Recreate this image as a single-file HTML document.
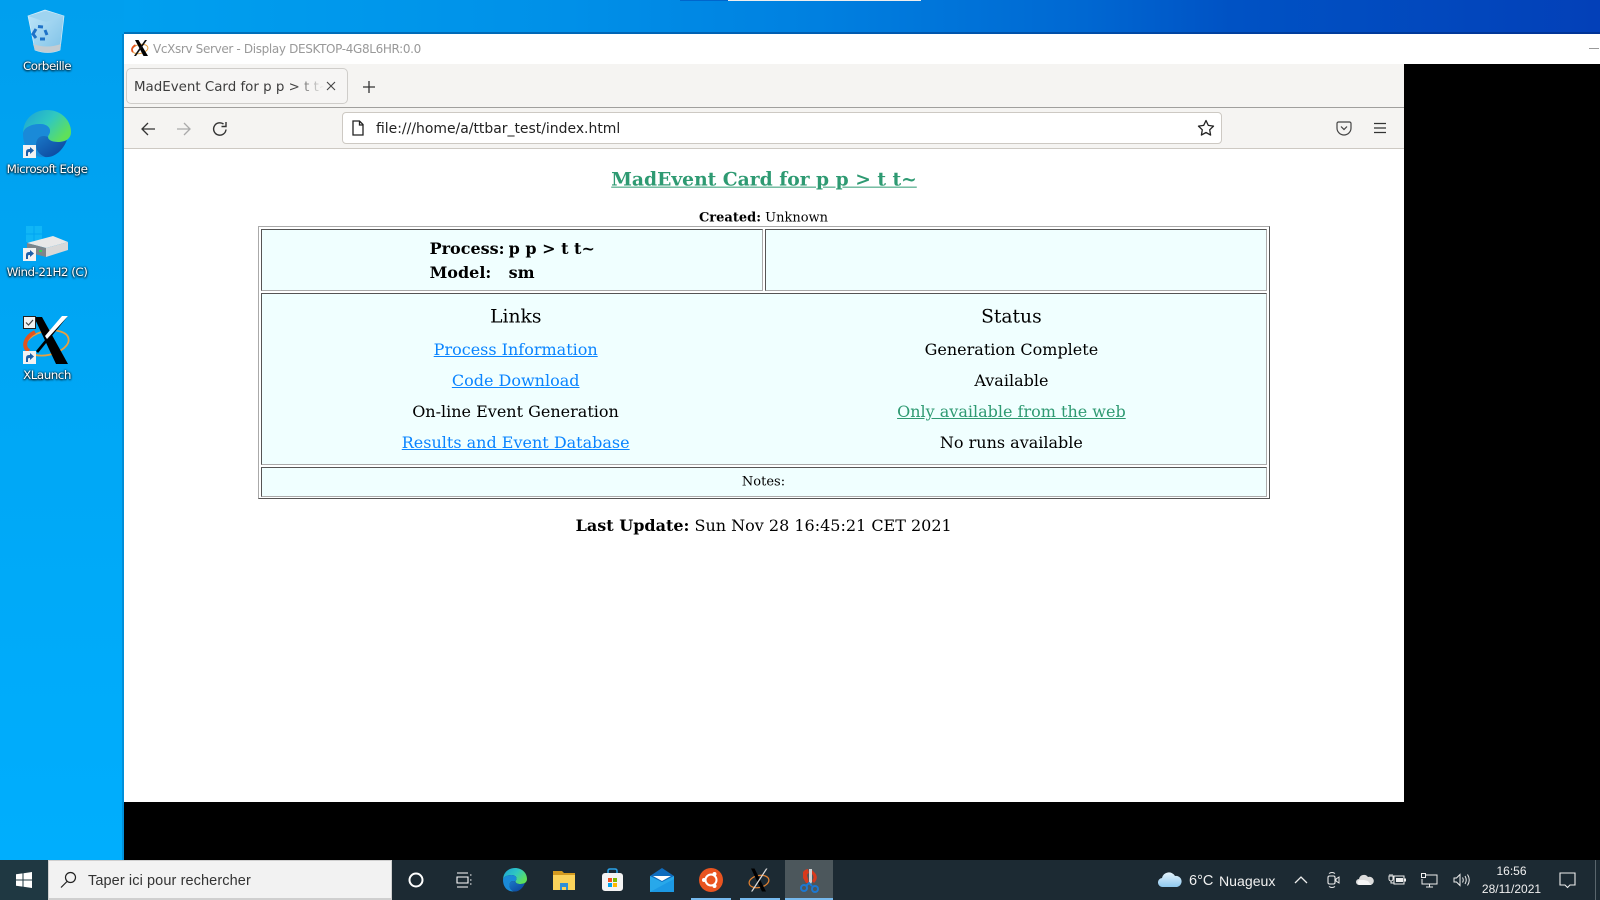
<!DOCTYPE html>
<html><head><meta charset="utf-8"><title>MadEvent Card</title>
<style>
html,body{margin:0;padding:0;width:1600px;height:900px;overflow:hidden;background:#00a8f6}
body{position:relative;font-family:"Liberation Sans",sans-serif}
.a{position:absolute}
.t{position:absolute;white-space:pre;line-height:1}
.c{position:absolute;white-space:pre;line-height:1;transform:translate(-50%,-50%)}
.s{font-family:"DejaVu Serif",serif;color:#000}
.d{font-family:"DejaVu Sans",sans-serif}
.lb{color:#fff;font-size:11.9px;font-family:"DejaVu Sans",sans-serif;letter-spacing:-.5px;text-shadow:0 1px 2px #000,0 0 2px #000}
.cell{position:absolute;box-sizing:border-box;background:#f0ffff;border:1px solid;border-color:#555 #aaa #aaa #555}
a{text-decoration:underline}
.bl{color:#0a84ff}.gr{color:#2e9a72}
.tb{color:#fff;font-family:"DejaVu Sans",sans-serif}
</style></head><body>
<div class="a" style="left:0;top:0;width:124px;height:860px;background:linear-gradient(180deg,#009fee 0%,#00a6f4 40%,#00aefd 100%)"></div>
<div class="a" style="left:124px;top:0;width:1476px;height:34px;background:linear-gradient(90deg,#00a0ef 0%,#0090e8 30%,#0080e0 47%,#0068d2 65%,#0052c4 75%,#0340b8 100%)"></div>
<div class="a" style="left:124px;top:32px;width:1476px;height:2px;background:rgba(0,30,90,.35)"></div>
<div class="a" style="left:680px;top:0;width:48px;height:1px;background:#0066cc"></div>
<div class="a" style="left:728px;top:0;width:193px;height:1px;background:#eee"></div>

<!-- window -->
<div class="a" style="left:122px;top:34px;width:2px;height:826px;background:rgba(0,60,120,.25)"></div>
<div class="a" style="left:124px;top:34px;width:1476px;height:826px;background:#000"></div>
<div class="a" style="left:124px;top:34px;width:1476px;height:30px;background:#fff"></div>
<svg class="a" style="left:131px;top:39px" width="18" height="18" viewBox="0 0 18 18"><ellipse cx="9" cy="10" rx="8" ry="4.500" transform="rotate(-12 9 10)" fill="none" stroke="#e8a040" stroke-width="1"/><path d="M4.500 6C1 8 0 11 2 13" fill="none" stroke="#e2531e" stroke-width="1.800"/><path d="M4 1h3.500L17 17h-4.500z" fill="#000"/><path d="M16 1h-2L3 17h2z" fill="#111"/></svg>
<div class="t" style="left:153px;top:43px;font-size:12px;color:#999;font-family:'DejaVu Sans',sans-serif;letter-spacing:-.35px">VcXsrv Server - Display DESKTOP-4G8L6HR:0.0</div>
<div class="a" style="left:1589px;top:48px;width:10px;height:1px;background:#999"></div>

<!-- browser chrome -->
<div class="a" style="left:124px;top:64px;width:1280px;height:43px;background:#f5f4f2"></div>
<div class="a" style="left:124px;top:107px;width:1280px;height:1px;background:#a09f9d"></div>
<div class="a" style="left:124px;top:108px;width:1280px;height:40px;background:#f5f4f2"></div>
<div class="a" style="left:124px;top:148px;width:1280px;height:1px;background:#cdc9c3"></div>
<div class="a" style="left:124px;top:149px;width:1280px;height:653px;background:#fff"></div>
<div class="a" style="left:126px;top:68px;width:222px;height:36px;box-sizing:border-box;background:#f6f5f4;border:1px solid #cfcdca;border-radius:5px"></div>
<div class="t d" style="left:134px;top:81px;font-size:13.4px;color:#3d3d3d;width:190px;overflow:hidden;-webkit-mask-image:linear-gradient(90deg,#000 84%,transparent 100%)">MadEvent Card for p p &gt; t t~</div>
<svg class="a" style="left:326px;top:81px" width="10" height="10" viewBox="0 0 10 10"><path d="M1 1l8 8M9 1l-8 8" stroke="#444" stroke-width="1.1"/></svg>
<svg class="a" style="left:362px;top:80px" width="14" height="14" viewBox="0 0 14 14"><path d="M7 1v12M1 7h12" stroke="#333" stroke-width="1.3"/></svg>
<svg class="a" style="left:140px;top:121px" width="16" height="16" viewBox="0 0 16 16"><path d="M15 8H2M8 2L2 8l6 6" fill="none" stroke="#333" stroke-width="1.3"/></svg>
<svg class="a" style="left:176px;top:121px" width="16" height="16" viewBox="0 0 16 16"><path d="M1 8h13M8 2l6 6-6 6" fill="none" stroke="#aaa" stroke-width="1.3"/></svg>
<svg class="a" style="left:212px;top:121px" width="16" height="16" viewBox="0 0 16 16"><path d="M14 8.500A6.200 6.200 0 1 1 11.500 3M14 1v4.500H9.500" fill="none" stroke="#333" stroke-width="1.400"/></svg>
<div class="a" style="left:342px;top:112px;width:880px;height:32px;box-sizing:border-box;background:#fff;border:1px solid #cdc9c3;border-radius:4px"></div>
<svg class="a" style="left:351px;top:120px" width="14" height="16" viewBox="0 0 14 16"><path d="M2 1h6.500L12 4.500V15H2zM8.500 1v4H12" fill="none" stroke="#222" stroke-width="1.300"/></svg>
<div class="t d" style="left:376px;top:123px;font-size:13.95px;color:#222">file:///home/a/ttbar_test/index.html</div>
<svg class="a" style="left:1197px;top:119px" width="18" height="18" viewBox="0 0 18 18"><path d="M9 1.500l2.300 4.900 5.200.7-3.800 3.700.9 5.300L9 13.500l-4.600 2.600.9-5.300L1.500 7.100l5.200-.7z" fill="none" stroke="#222" stroke-width="1.300" stroke-linejoin="round"/></svg>
<svg class="a" style="left:1336px;top:121px" width="16" height="15" viewBox="0 0 16 15"><path d="M2.500 1h11A1.500 1.500 0 0 1 15 2.500V7A7 7 0 0 1 1 7V2.500A1.500 1.500 0 0 1 2.500 1zM5 5.500l3 3 3-3" fill="none" stroke="#444" stroke-width="1.200"/></svg>
<svg class="a" style="left:1373px;top:122px" width="14" height="12" viewBox="0 0 14 12"><path d="M1 1.500h12M1 6h12M1 10.500h12" stroke="#333" stroke-width="1.200"/></svg>

<!-- page -->
<div class="c s gr" style="left:764px;top:180px;font-size:18.7px;font-weight:bold"><a>MadEvent Card for p p &gt; t t~</a></div>
<div class="c s" style="left:763.500px;top:218px;font-size:13px"><b>Created:</b> Unknown</div>
<div class="a" style="left:258px;top:226px;width:1012px;height:273px;box-sizing:border-box;border:1px solid;border-color:#aaa #555 #555 #aaa"></div>
<div class="cell" style="left:261px;top:229px;width:502px;height:62px"></div>
<div class="cell" style="left:765px;top:229px;width:502px;height:62px"></div>
<div class="cell" style="left:261px;top:293px;width:1006px;height:172px"></div>
<div class="cell" style="left:261px;top:467px;width:1006px;height:29.500px"></div>
<div class="t s" style="left:429.600px;top:241px;font-size:16px;font-weight:bold">Process:</div>
<div class="t s" style="left:508.600px;top:241px;font-size:16px;font-weight:bold">p p &gt; t t~</div>
<div class="t s" style="left:429.600px;top:265px;font-size:16px;font-weight:bold">Model:</div>
<div class="t s" style="left:508.600px;top:265px;font-size:16px;font-weight:bold">sm</div>
<div class="c s" style="left:515.800px;top:318px;font-size:18.7px">Links</div>
<div class="c s bl" style="left:515.700px;top:350px;font-size:16px"><a>Process Information</a></div>
<div class="c s bl" style="left:515.700px;top:381px;font-size:16px"><a>Code Download</a></div>
<div class="c s" style="left:515.500px;top:412px;font-size:16px">On-line Event Generation</div>
<div class="c s bl" style="left:515.700px;top:443px;font-size:16px"><a>Results and Event Database</a></div>
<div class="c s" style="left:1011.400px;top:318px;font-size:18.7px">Status</div>
<div class="c s" style="left:1011.400px;top:350px;font-size:16px">Generation Complete</div>
<div class="c s" style="left:1011.400px;top:381px;font-size:16px">Available</div>
<div class="c s gr" style="left:1011.400px;top:412px;font-size:16px"><a>Only available from the web</a></div>
<div class="c s" style="left:1011.400px;top:443px;font-size:16px">No runs available</div>
<div class="c s" style="left:763.500px;top:482px;font-size:13px">Notes:</div>
<div class="c s" style="left:763.700px;top:526px;font-size:16px"><b>Last Update:</b> Sun Nov 28 16:45:21 CET 2021</div>

<!-- desktop icons -->
<svg class="a" style="left:24px;top:6px" width="46" height="50" viewBox="0 0 46 50"><defs><linearGradient id="bn" x1="0" y1="0" x2="1" y2="1"><stop offset="0" stop-color="#bfe6fa"/><stop offset="1" stop-color="#7cc0e6"/></linearGradient></defs><path d="M4 10L21 4l19 6-4 34q-12 5-25 0z" fill="url(#bn)" stroke="#d5eefa" stroke-width=".7"/><path d="M4 10l18 6 18-6-18-5z" fill="#9fd4f0"/><path d="M9 38q14 5 28 0l-1 6q-12 5-25 0z" fill="#c3ccd2"/><path d="M12 23l-3 5 3 4M19 21l-5-.5M21 33h-5M23 29l-2-5" fill="none" stroke="#1e72c8" stroke-width="3"/></svg>
<div class="c lb" style="left:47px;top:67px">Corbeille</div>

<svg class="a" style="left:23px;top:110px" width="48" height="48" viewBox="0 0 48 48"><defs><linearGradient id="e1" x1="0" y1="0" x2="1" y2=".6"><stop offset="0" stop-color="#1aa0d8"/><stop offset=".55" stop-color="#30c8c0"/><stop offset="1" stop-color="#5fe05a"/></linearGradient><linearGradient id="e2" x1="0" y1="0" x2="1" y2="1"><stop offset="0" stop-color="#1a78c8"/><stop offset="1" stop-color="#0a3f96"/></linearGradient></defs><path d="M0 24C0 8 12 0 24 0c14 0 24 10 24 22 0 7-6 10-13 10-6 0-10-2-10-5 0-2 2-3 2-6 0-4-4-7-10-7C8 14 0 18 0 24z" fill="url(#e1)"/><path d="M0 24c0-6 8-10 17-10 6 0 10 3 10 7 0 3-2 4-2 6-8-3-12 2-12 8 0 6 4 10 9 12C9 48 0 38 0 24z" fill="#1a8ad8"/><path d="M13 35c0-7 5-11 12-8 0 3 4 5 10 5 4 0 7-1 9-2-4 10-12 18-22 17-5-2-9-6-9-12z" fill="url(#e2)"/></svg>
<svg class="a" style="left:23px;top:145px" width="13" height="13" viewBox="0 0 13 13"><rect width="13" height="13" fill="#f2f2f2"/><path d="M3 11V7q0-3 3-3h1V2l4 3.500L7 9V7H6q-1 0-1 1v3z" fill="#1d5fa8"/></svg>
<div class="c lb" style="left:47px;top:170px">Microsoft Edge</div>

<svg class="a" style="left:26px;top:226px" width="44" height="34" viewBox="0 0 44 34"><g fill="#10b6f6"><rect x="0" y="0" width="7.500" height="7.500"/><rect x="8.500" y="0" width="7.500" height="7.500"/><rect x="0" y="8.500" width="7.500" height="7.500"/><rect x="8.500" y="8.500" width="7.500" height="7.500"/></g><path d="M1 17L27 10l15 6-22 6z" fill="#e8e8e8"/><path d="M1 17l19 5v9L1 26z" fill="#7d858b"/><path d="M20 22l22-6v8l-22 7z" fill="#d8d8d8"/><rect x="13" y="24" width="3" height="2" fill="#35d25a"/></svg>
<svg class="a" style="left:23px;top:248px" width="13" height="13" viewBox="0 0 13 13"><rect width="13" height="13" fill="#f2f2f2"/><path d="M3 11V7q0-3 3-3h1V2l4 3.500L7 9V7H6q-1 0-1 1v3z" fill="#1d5fa8"/></svg>
<div class="c lb" style="left:47px;top:273px">Wind-21H2 (C)</div>

<svg class="a" style="left:23px;top:316px" width="48" height="49" viewBox="0 0 48 49"><ellipse cx="24" cy="27" rx="22" ry="12" transform="rotate(-12 24 27)" fill="none" stroke="#e8a040" stroke-width="1.800"/><path d="M12 16C2 21-1 31 6 35" fill="none" stroke="#e2531e" stroke-width="4"/><path d="M11 1h8l26 47H33z" fill="#000"/><path d="M45 0h-3L13 35l2 2z" fill="#000"/><path d="M45 0h-6L22 20l2 3z" fill="#fff"/></svg>
<div class="a" style="left:23px;top:316px;width:13px;height:13px;box-sizing:border-box;background:#f2f2f2;border:1px solid #222"></div>
<svg class="a" style="left:24px;top:317px" width="11" height="11" viewBox="0 0 11 11"><path d="M2 5.500l2.500 2.500L9 3" fill="none" stroke="#444" stroke-width="1.200"/></svg>
<svg class="a" style="left:23px;top:351px" width="13" height="13" viewBox="0 0 13 13"><rect width="13" height="13" fill="#f2f2f2"/><path d="M3 11V7q0-3 3-3h1V2l4 3.500L7 9V7H6q-1 0-1 1v3z" fill="#1d5fa8"/></svg>
<div class="c lb" style="left:47px;top:376px">XLaunch</div>

<!-- taskbar -->
<div class="a" style="left:0;top:860px;width:1600px;height:40px;background:#1c2a33"></div>
<div class="a" style="left:0;top:860px;width:48px;height:40px;background:#1f3842"></div>
<svg class="a" style="left:16px;top:872px" width="16" height="16" viewBox="0 0 16 16"><path d="M0 2.300l6.500-.9V7.500H0zM7.500 1.200L16 0v7.500H7.500zM0 8.500h6.500v6.100L0 13.700zM7.500 8.500H16V16l-8.500-1.200z" fill="#fff"/></svg>
<div class="a" style="left:48px;top:860px;width:344px;height:40px;box-sizing:border-box;background:#f2f2f2;border:1px solid #cfcfcf;border-bottom-width:2px"></div>
<svg class="a" style="left:60px;top:871px" width="17" height="17" viewBox="0 0 17 17"><circle cx="10.500" cy="6.500" r="5" fill="none" stroke="#222" stroke-width="1.200"/><path d="M7 10.500l-6 6" stroke="#222" stroke-width="1.200"/></svg>
<div class="t" style="left:88px;top:874px;font-size:14.500px;color:#333;font-family:'Liberation Sans',sans-serif;letter-spacing:.1px">Taper ici pour rechercher</div>
<svg class="a" style="left:407px;top:871px" width="18" height="18" viewBox="0 0 18 18"><circle cx="9" cy="9" r="6.500" fill="none" stroke="#fff" stroke-width="2"/></svg>
<svg class="a" style="left:456px;top:872px" width="16" height="16" viewBox="0 0 16 16"><path d="M1 1h11M1 15h11M1 5h11v6H1zM14 3h1.500M14 8h1.500M14 12h1.500" fill="none" stroke="#fff" stroke-width="1.100"/></svg>
<svg class="a" style="left:503px;top:868px" width="24" height="24" viewBox="0 0 48 48"><path d="M0 24C0 8 12 0 24 0c14 0 24 10 24 22 0 7-6 10-13 10-6 0-10-2-10-5 0-2 2-3 2-6 0-4-4-7-10-7C8 14 0 18 0 24z" fill="url(#e1)"/><path d="M0 24c0-6 8-10 17-10 6 0 10 3 10 7 0 3-2 4-2 6-8-3-12 2-12 8 0 6 4 10 9 12C9 48 0 38 0 24z" fill="#1a8ad8"/><path d="M13 35c0-7 5-11 12-8 0 3 4 5 10 5 4 0 7-1 9-2-4 10-12 18-22 17-5-2-9-6-9-12z" fill="url(#e2)"/></svg>
<svg class="a" style="left:553px;top:870px" width="22" height="20" viewBox="0 0 22 20"><path d="M0 1h9l2 2h11v4H0z" fill="#d49a1f"/><path d="M0 5h22v15H0z" fill="#fbd35b"/><path d="M7 13h8v7h-2v-3H9v3H7z" fill="#2f8fd8"/></svg>
<svg class="a" style="left:601px;top:868px" width="23" height="24" viewBox="0 0 23 24"><path d="M7 6V3q0-2 2-2h5q2 0 2 2v3" fill="none" stroke="#2aa3ea" stroke-width="1.500"/><rect x="1" y="5" width="21" height="18" rx="3" fill="#f4f4f4"/><rect x="7" y="10" width="4" height="4" fill="#f25022"/><rect x="12" y="10" width="4" height="4" fill="#7fba00"/><rect x="7" y="15" width="4" height="4" fill="#00a4ef"/><rect x="12" y="15" width="4" height="4" fill="#ffb900"/></svg>
<svg class="a" style="left:650px;top:868px" width="24" height="24" viewBox="0 0 24 24"><path d="M0 8L12 0l12 8v16H0z" fill="#0f6cbd"/><path d="M0 8l12 6 12-6v16H0z" fill="#28a8ea"/><path d="M3 8h18l-9 5z" fill="#fff"/><path d="M0 24L24 11v13z" fill="#1490df" opacity=".6"/></svg>
<svg class="a" style="left:699px;top:868px" width="24" height="24" viewBox="0 0 24 24"><circle cx="12" cy="12" r="12" fill="#e95420"/><circle cx="12" cy="12" r="5.500" fill="none" stroke="#fff" stroke-width="2"/><circle cx="5" cy="12" r="2" fill="#fff"/><circle cx="15.500" cy="6" r="2" fill="#fff"/><circle cx="15.500" cy="18" r="2" fill="#fff"/></svg>
<svg class="a" style="left:747px;top:868px" width="24" height="24" viewBox="0 0 48 48"><ellipse cx="24" cy="27" rx="20" ry="12" transform="rotate(-12 24 27)" fill="none" stroke="#e08030" stroke-width="2.500"/><path d="M8 1h7l23 46h-8z" fill="#000"/><path d="M41 1h-3L8 47h3z" fill="#ddd"/></svg>
<div class="a" style="left:785px;top:860px;width:48px;height:40px;background:#4c575c"></div>
<svg class="a" style="left:798px;top:868px" width="24" height="26" viewBox="0 0 24 26"><path d="M5 4a7 7 0 0 1 5-3l1 4a4 4 0 0 0-2 2l2 8H8L5 10z" fill="#d8391b"/><path d="M14 2l3 3q4 5-1 10l-2-2q3-4 0-7z" fill="#d8391b"/><path d="M11 1h3v13l-1 2-2-2z" fill="#d0d0d0"/><circle cx="6" cy="20" r="3" fill="none" stroke="#1d78d0" stroke-width="2"/><circle cx="17" cy="21" r="3" fill="none" stroke="#1d78d0" stroke-width="2"/><path d="M8 18l3-3 3 3" stroke="#1d78d0" stroke-width="2" fill="none"/></svg>
<div class="a" style="left:691px;top:898px;width:40px;height:2px;background:#76b9ed"></div>
<div class="a" style="left:740px;top:898px;width:40px;height:2px;background:#76b9ed"></div>
<div class="a" style="left:785px;top:898px;width:48px;height:2px;background:#76b9ed"></div>

<!-- tray -->
<svg class="a" style="left:1158px;top:870px" width="24" height="18" viewBox="0 0 24 18"><defs><linearGradient id="cl" x1="0" y1="0" x2="0" y2="1"><stop offset="0" stop-color="#e5f3fc"/><stop offset="1" stop-color="#8ec8ef"/></linearGradient></defs><path d="M5 17a4.500 4.500 0 0 1-1-9 7 7 0 0 1 13-2 5.500 5.500 0 0 1 2 11z" fill="url(#cl)"/></svg>
<div class="t" style="left:1189px;top:874px;font-size:14.500px;color:#f0f0f0;letter-spacing:0">6°C</div>
<div class="t" style="left:1219px;top:874px;font-size:14.100px;color:#f0f0f0">Nuageux</div>
<svg class="a" style="left:1294px;top:875px" width="14" height="10" viewBox="0 0 14 10"><path d="M1 8l6-6 6 6" fill="none" stroke="#eee" stroke-width="1.300"/></svg>
<svg class="a" style="left:1327px;top:871px" width="13" height="18" viewBox="0 0 13 18"><path d="M2 2.500q3-2 6 0M2 15.500q3 2 6 0" fill="none" stroke="#eee"/><rect x="1" y="5" width="7" height="8" rx="1.500" fill="none" stroke="#eee" stroke-width="1.100"/><path d="M9 8l3-2v6l-3-2z" fill="none" stroke="#eee"/></svg>
<svg class="a" style="left:1356px;top:873px" width="18" height="13" viewBox="0 0 18 13"><path d="M3 12a3 3 0 0 1 0-6 5 5 0 0 1 9-2 4 4 0 0 1 3 8z" fill="#dcdcdc"/><path d="M3 12a3 3 0 0 1 0-5h5l4 1 3 4z" fill="#f5f5f5"/></svg>
<svg class="a" style="left:1388px;top:873px" width="18" height="13" viewBox="0 0 18 13"><rect x="6" y="3" width="10" height="8" fill="none" stroke="#eee"/><rect x="8" y="5" width="7" height="4" fill="#eee"/><path d="M16.500 5.500h1.500v3h-1.500" fill="#eee"/><path d="M1 3v3a2 2 0 0 0 4 0V3zM2 1v2M4 1v2M3 8v2h3" fill="none" stroke="#eee"/></svg>
<svg class="a" style="left:1421px;top:873px" width="17" height="15" viewBox="0 0 17 15"><path d="M4 2h12v9H1V6M8.500 11v3M5 14h7" fill="none" stroke="#eee"/><rect x="0.500" y="0.500" width="4" height="4" fill="none" stroke="#eee"/></svg>
<svg class="a" style="left:1453px;top:873px" width="17" height="14" viewBox="0 0 17 14"><path d="M1 5v4h2.500L7 12.500V1.500L3.500 5z" fill="none" stroke="#eee"/><path d="M9.500 4.500q1.500 2.500 0 5M12 3q2.500 4 0 8M14.500 1.500q3.500 5.500 0 11" fill="none" stroke="#eee"/></svg>
<div class="c" style="left:1511.500px;top:871px;font-size:12px;color:#f0f0f0">16:56</div>
<div class="c" style="left:1511.500px;top:889px;font-size:12px;color:#f0f0f0">28/11/2021</div>
<svg class="a" style="left:1559px;top:872px" width="17" height="17" viewBox="0 0 17 17"><path d="M1 1h15v12h-5l-2.500 2.500L6 13H1z" fill="none" stroke="#eee" stroke-width="1.100"/></svg>
<div class="a" style="left:1595px;top:860px;width:1px;height:40px;background:#5a666d"></div>
</body></html>
